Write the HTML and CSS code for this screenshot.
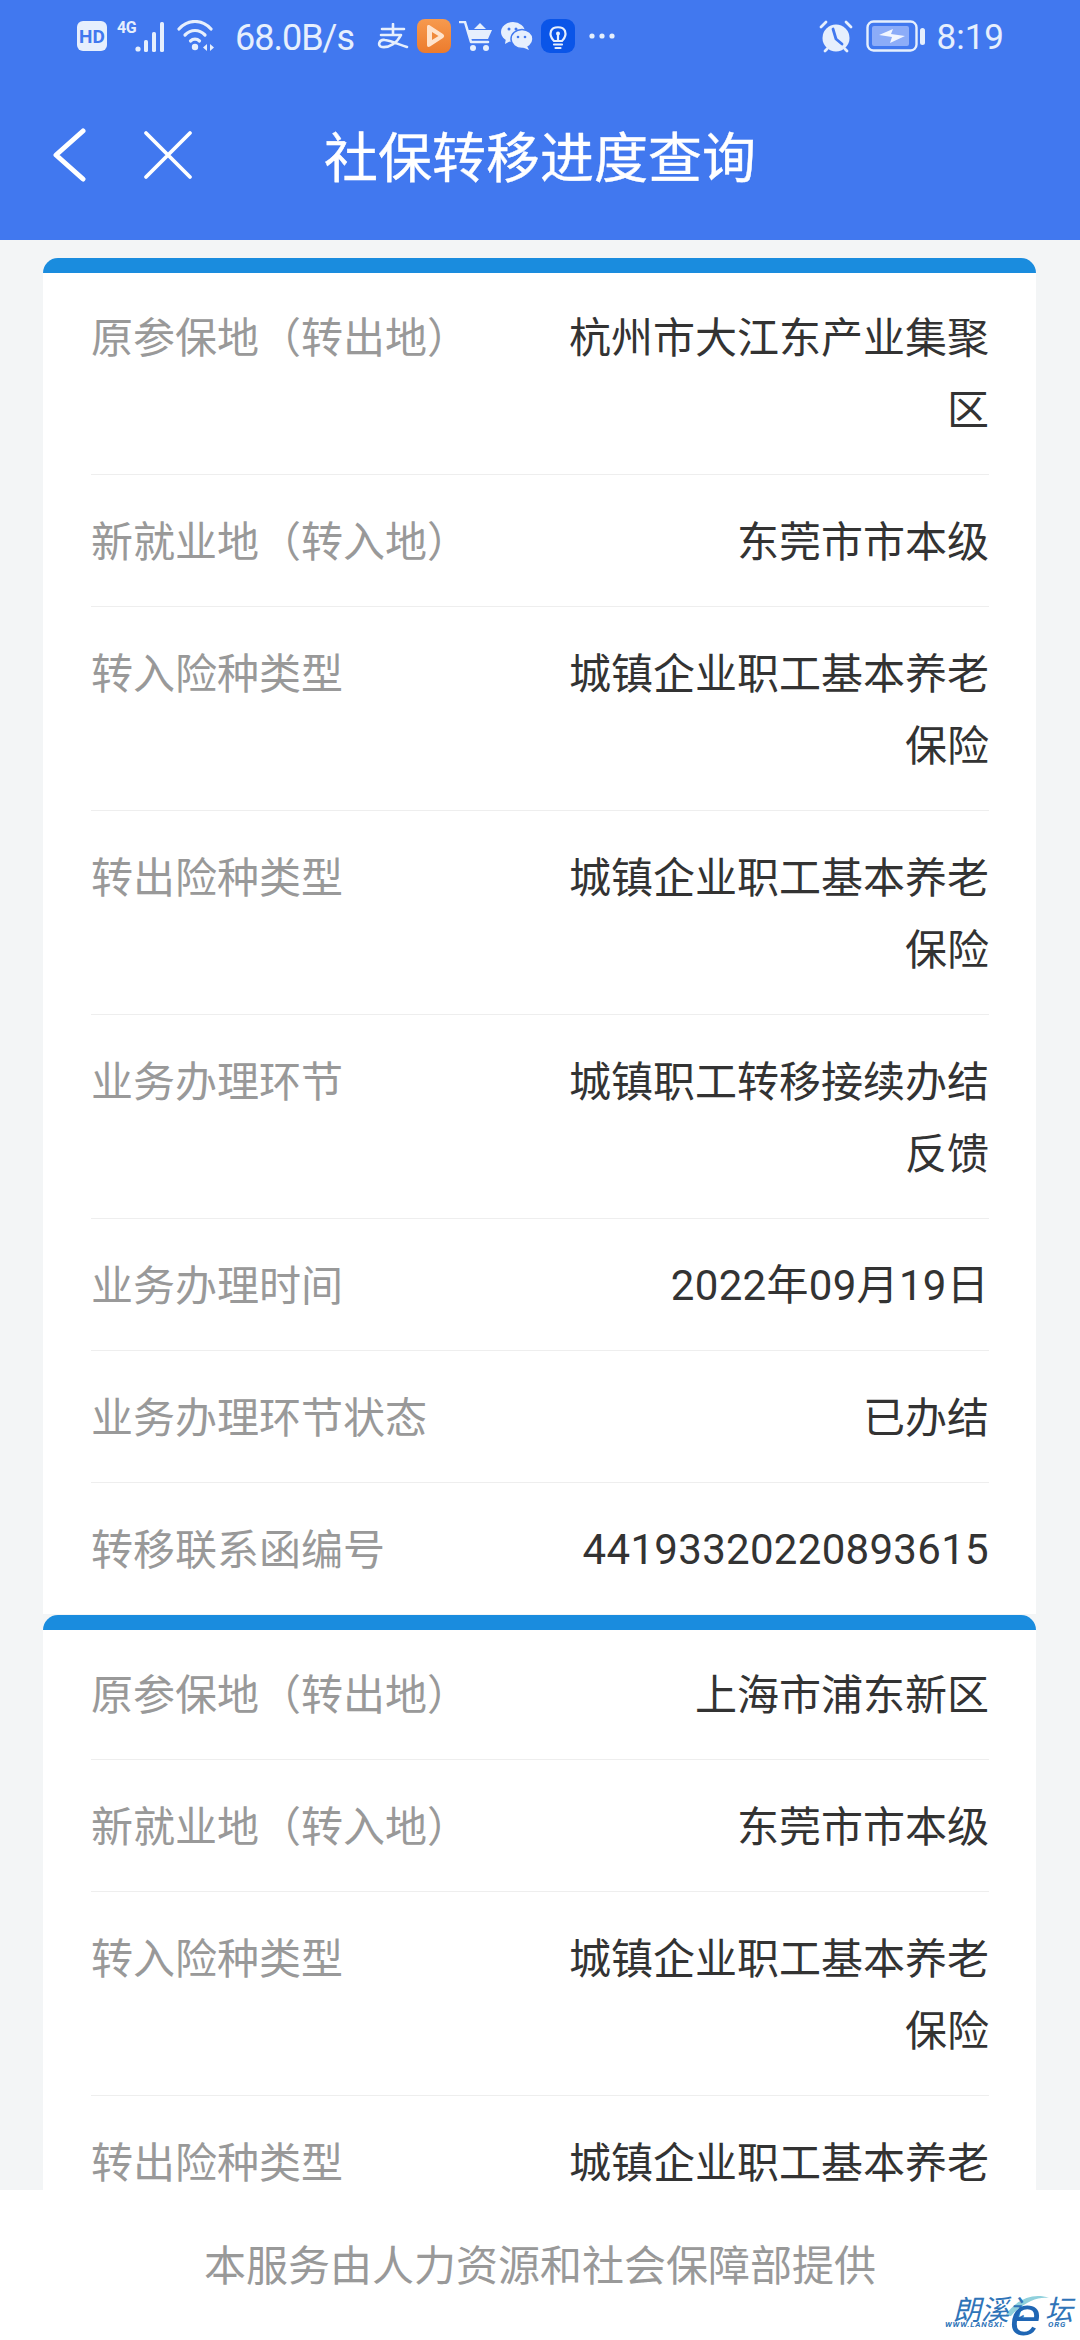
FILE: index.html
```html
<!DOCTYPE html>
<html lang="zh-CN">
<head>
<meta charset="utf-8">
<title>社保转移进度查询</title>
<link rel="stylesheet" href="styles.css">
</head>
<body>
<div class="app">
  <header class="top">
    <div class="status">
      <div class="status-left">
        <svg class="i-hd" width="30" height="30" viewBox="0 0 30 30"><rect width="30" height="30" rx="6" fill="#e6effd"/><text x="15" y="21.5" text-anchor="middle" class="hd-text">HD</text></svg>
        <div class="net">
          <span class="net-4g">4G</span>
          <svg width="33" height="31" viewBox="0 0 33 31" fill="#e6effd"><circle cx="3" cy="28" r="2.6"/><rect x="9" y="19" width="4" height="12" rx="1.6"/><rect x="17" y="11" width="4" height="20" rx="1.6"/><rect x="25" y="1" width="4" height="30" rx="1.6"/></svg>
        </div>
        <svg class="i-wifi" width="38" height="32" viewBox="0 0 38 32" fill="none" stroke="#e6effd" stroke-width="3.2" stroke-linecap="round"><path d="M2 9C11 -1 25 -1 34 9"/><path d="M8 15C14 9 22 9 28 15"/><path d="M13.500 21C16 18.600 20 18.600 22.500 21"/><circle cx="18" cy="27" r="3.200" fill="#e6effd" stroke="none"/><path d="M30 24v7l-4-3.500zM33 24v7l4-3.500z" fill="#e6effd" stroke="none"/></svg>
        <span class="speed">68.0B/s</span>
        <div class="apps">
          <svg width="32" height="26" viewBox="0 0 32 26" fill="none" stroke="#e6effd" stroke-width="2.6" stroke-linecap="round" stroke-linejoin="round"><path d="M5 6H27M16 1V11M4 12H24C20 20 12 25 5 24C0 23 2 16 8 17C15 18 23 22 30 24"/></svg>
          <svg width="34" height="34" viewBox="0 0 34 34"><defs><linearGradient id="og" x1="0" y1="0" x2="0" y2="1"><stop offset="0" stop-color="#f79a4e"/><stop offset="1" stop-color="#ec7b2d"/></linearGradient></defs><rect width="34" height="34" rx="8" fill="url(#og)"/><path d="M10 8C10 6 11.500 5.500 13 6.500L26 15C27.500 16 27.500 18 26 19L13 27.500C11.500 28.500 10 28 10 26Z" fill="#ffe3cc"/><path d="M15 13L21.500 17L15 21Z" fill="#f08a3c"/></svg>
          <svg width="34" height="30" viewBox="0 0 34 30" fill="#e6effd"><path d="M1 1H6L12 21H29" fill="none" stroke="#e6effd" stroke-width="2.600" stroke-linecap="round" stroke-linejoin="round"/><path d="M8 9H33L29 18H11Z"/><path d="M15 8L21 2L27 8Z"/><circle cx="14" cy="27" r="3"/><circle cx="27" cy="27" r="3"/></svg>
          <svg width="32" height="28" viewBox="0 0 32 28"><ellipse cx="12" cy="10" rx="12" ry="10" fill="#e6effd"/><path d="M5 16L4 22L11 18Z" fill="#e6effd"/><ellipse cx="21" cy="17" rx="11" ry="9.500" fill="#e6effd" stroke="#4178ef" stroke-width="1.500"/><path d="M26 24L28 28L21 25Z" fill="#e6effd"/><circle cx="8" cy="7" r="1.500" fill="#4178ef"/><circle cx="15" cy="7" r="1.500" fill="#4178ef"/><circle cx="17" cy="15" r="1.300" fill="#4178ef"/><circle cx="24" cy="15" r="1.300" fill="#4178ef"/></svg>
          <svg width="34" height="34" viewBox="0 0 34 34" fill="none"><rect width="34" height="34" rx="9" fill="#0a55e8"/><path d="M13 22C9 18 9 15 10 12C12 7 22 7 24 12C25 15 25 18 21 22Z" stroke="#e6effd" stroke-width="2.200" stroke-linejoin="round"/><path d="M13 25.500H21M14.500 29H19.500" stroke="#e6effd" stroke-width="2.200" stroke-linecap="round"/><path d="M17 15V22" stroke="#e6effd" stroke-width="2.200"/><circle cx="17" cy="14.500" r="2" fill="#e6effd"/></svg>
          <svg class="i-dots" width="26" height="6" viewBox="0 0 26 6" fill="#e6effd"><circle cx="3" cy="3" r="2.600"/><circle cx="13" cy="3" r="2.600"/><circle cx="23" cy="3" r="2.600"/></svg>
        </div>
      </div>
      <div class="status-right">
        <svg width="34" height="33" viewBox="0 0 34 33"><circle cx="17" cy="18" r="13.500" fill="#e6effd"/><path d="M14 9L17 19L23 24" fill="none" stroke="#4178ef" stroke-width="2.800" stroke-linecap="round" stroke-linejoin="round"/><path d="M2 7L7 2M32 7L27 2M6 31L8 29M28 31L26 29" stroke="#e6effd" stroke-width="2.800" stroke-linecap="round"/></svg>
        <svg width="60" height="32" viewBox="0 0 60 32"><rect x="1.500" y="1.500" width="49" height="29" rx="6" fill="none" stroke="#e6effd" stroke-width="2.400"/><rect x="6" y="6" width="37" height="20" rx="2" fill="#8cacf8"/><path d="M13 15L27 9L25 14L39 16L24 23L26 17Z" fill="#f2f6ff"/><rect x="54" y="8" width="5" height="17" rx="2.500" fill="#e6effd"/></svg>
        <span class="clock">8:19</span>
      </div>
    </div>
    <div class="nav">
      <div class="nav-buttons">
        <svg width="34" height="54" viewBox="0 0 34 54" fill="none" stroke="#fff" stroke-width="5" stroke-linecap="round" stroke-linejoin="round"><path d="M31 3L4 27L31 51"/></svg>
        <svg width="50" height="50" viewBox="0 0 50 50" fill="none" stroke="#fff" stroke-width="3.800" stroke-linecap="round"><path d="M3 3L47 47M47 3L3 47"/></svg>
      </div>
      <h1 class="title">社保转移进度查询</h1>
    </div>
  </header>

  <main class="list">
    <section class="card">
      <div class="card-bar"></div>
      <div class="card-body">
        <div class="row"><span class="label">原参保地（转出地）</span><span class="value">杭州市大江东产业集聚区</span></div>
        <div class="row"><span class="label">新就业地（转入地）</span><span class="value">东莞市市本级</span></div>
        <div class="row"><span class="label">转入险种类型</span><span class="value">城镇企业职工基本养老保险</span></div>
        <div class="row"><span class="label">转出险种类型</span><span class="value">城镇企业职工基本养老保险</span></div>
        <div class="row"><span class="label">业务办理环节</span><span class="value">城镇职工转移接续办结反馈</span></div>
        <div class="row"><span class="label">业务办理时间</span><span class="value num">2022年09月19日</span></div>
        <div class="row"><span class="label">业务办理环节状态</span><span class="value">已办结</span></div>
        <div class="row"><span class="label">转移联系函编号</span><span class="value num">44193320220893615</span></div>
      </div>
    </section>
    <section class="card">
      <div class="card-bar"></div>
      <div class="card-body">
        <div class="row"><span class="label">原参保地（转出地）</span><span class="value">上海市浦东新区</span></div>
        <div class="row"><span class="label">新就业地（转入地）</span><span class="value">东莞市市本级</span></div>
        <div class="row"><span class="label">转入险种类型</span><span class="value">城镇企业职工基本养老保险</span></div>
        <div class="row"><span class="label">转出险种类型</span><span class="value">城镇企业职工基本养老保险</span></div>
      </div>
    </section>
  </main>

  <footer class="foot">本服务由人力资源和社会保障部提供</footer>

  <div class="mark">
    <svg class="mark-swoosh" width="50" height="24" viewBox="0 0 50 24" fill="none"><path d="M2 22C12 6 30 -2 46 4C36 2 20 8 8 22Z" fill="#8fd0dc"/></svg>
    <span class="mark-name">朗溪讠</span>
    <span class="mark-e">e</span>
    <span class="mark-name mark-tan">坛</span>
    <span class="mark-url">WWW.LANGXI.</span>
    <span class="mark-url mark-org">ORG</span>
  </div>
</div>
</body>
</html>
```

FILE: styles.css
```css
* { box-sizing: border-box; }
html, body { margin: 0; padding: 0; }
body {
  width: 1080px;
  height: 2340px;
  overflow: hidden;
  font-family: "Noto Sans CJK SC", "Noto Sans", sans-serif;
  background: #f3f5f6;
}
.app {
  position: relative;
  width: 1080px;
  height: 2340px;
  display: flex;
  flex-direction: column;
}
.top {
  height: 240px;
  flex: none;
  background: #4178ef;
  display: flex;
  flex-direction: column;
}
.status {
  height: 72px;
  padding: 19px 76px 0 77px;
  display: flex;
  justify-content: space-between;
  align-items: flex-start;
  color: #e6effd;
}
.status-left, .status-right { display: flex; align-items: center; height: 34px; }
.i-hd { display: block; }
.hd-text { font: 700 19px "Roboto", sans-serif; fill: #4178ef; }
.net { display: flex; align-items: flex-end; margin-left: 10px; position: relative; width: 51px; height: 31px; }
.net svg { margin-left: 18px; display: block; }
.net-4g { position: absolute; left: 0; top: -1px; font: 700 16px/16px "Roboto", sans-serif; letter-spacing: -0.5px; }
.i-wifi { margin-left: 9px; }
.speed {
  margin-left: 20px;
  font: 400 36px/34px "Roboto", sans-serif;
  letter-spacing: -1px;
  width: 117px;
  padding-top: 4px;
  white-space: nowrap;
}
.apps { display: flex; align-items: center; gap: 8px; margin-left: 25px; }
.i-dots { margin-left: 6px; }
.status-right { gap: 13px; }
.clock { font: 400 35px/34px "Roboto", sans-serif; margin-left: -2px; padding-top: 4px; }
.nav {
  position: relative;
  flex: 1;
  display: flex;
  align-items: center;
  justify-content: center;
  padding-bottom: 2px;
}
.nav-buttons {
  position: absolute;
  left: 52px;
  top: 56px;
  display: flex;
  align-items: center;
  gap: 57px;
}
.title {
  margin: 0;
  font-size: 54px;
  font-weight: 400;
  -webkit-text-stroke: 0.4px #fff;
  line-height: 72px;
  color: #fff;
}
.list {
  flex: 1;
  min-height: 0;
  overflow: hidden;
  padding: 18px 44px 0 43px;
}
.card { margin-bottom: 1px; }
.card-bar {
  height: 15px;
  background: #1a8cde;
  border-radius: 18px 18px 0 0;
}
.card-body {
  background: #fff;
  padding: 0 47px 0 48px;
}
.row {
  display: flex;
  justify-content: space-between;
  align-items: flex-start;
  padding: 28px 0 31px;
  border-bottom: 1px solid #eeeeee;
  font-size: 42px;
  line-height: 72px;
}
.row:first-child { padding-top: 26px; }
.row:last-child { border-bottom: 0; }
.label { color: #999; flex: none; }
.value { color: #333; text-align: right; max-width: 430px; }
.num {
  font-family: "Roboto", "Noto Sans CJK SC", sans-serif;
  letter-spacing: 0.3px;
  margin-top: 3px;
  margin-bottom: -3px;
}
.foot {
  flex: none;
  height: 150px;
  background: #fff;
  display: flex;
  align-items: center;
  justify-content: center;
  padding-bottom: 6px;
  font-size: 42px;
  color: #999;
}
.mark {
  position: absolute;
  left: 945px;
  top: 2294px;
  width: 130px;
  height: 44px;
  color: #2f74b8;
}
.mark-name {
  position: absolute;
  left: 8px;
  top: 3px;
  font-size: 28px;
  line-height: 22px;
  font-style: italic;
  white-space: nowrap;
}
.mark-tan { left: 100px; }
.mark-url {
  position: absolute;
  left: 0;
  top: 27px;
  font: italic 700 8px/8px "Roboto", sans-serif;
  letter-spacing: 0.8px;
  white-space: nowrap;
}
.mark-org { left: 103px; }
.mark-e {
  position: absolute;
  left: 65px;
  top: -3px;
  font: italic 400 56px/50px "Liberation Sans", sans-serif;
  color: #1f66b4;
}
.mark-swoosh { position: absolute; left: 58px; top: 0; }
```
